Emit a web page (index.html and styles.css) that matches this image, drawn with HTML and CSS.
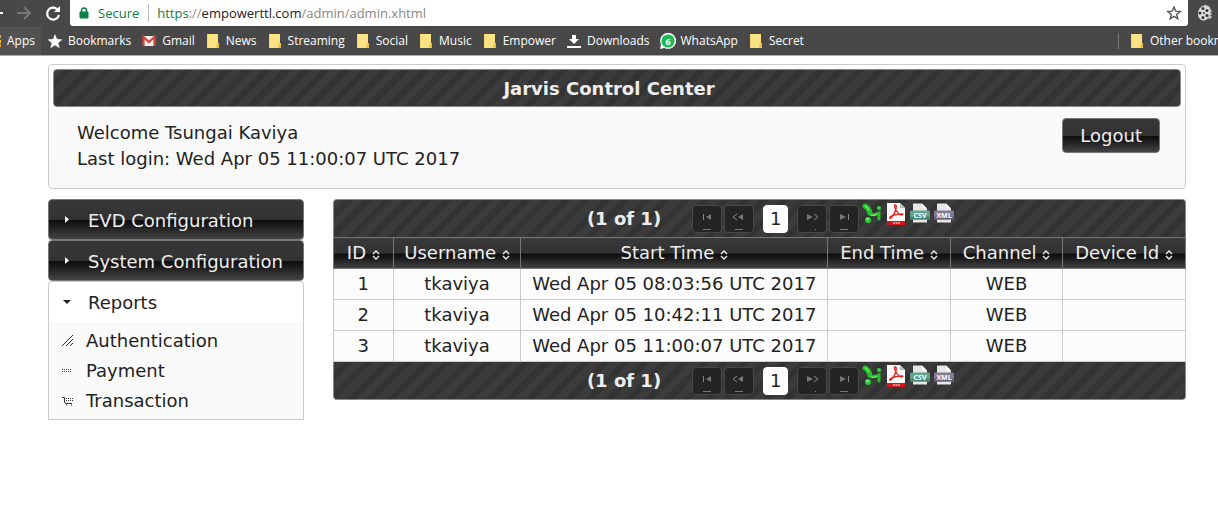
FILE: index.html
```html
<!DOCTYPE html>
<html lang="en">
<head>
<meta charset="utf-8">
<title>Jarvis Control Center</title>
<link rel="stylesheet" href="styles.css">
</head>
<body>
<svg class="sprites" aria-hidden="true">
  <symbol id="folder" viewBox="0 0 16 16"><path d="M2 1h11v9h1v5H2z" fill="#fce283"/><path d="M12 10h2v5h-3z" fill="#eec245"/><path d="M2 1h1v14H2z" fill="#f3d56b"/></symbol>
  <symbol id="sort" viewBox="0 0 8 12"><path d="M1 5l3-3 3 3M1 7l3 3 3-3" fill="none" stroke="#eee" stroke-width="1.4"/></symbol>
  <symbol id="first" viewBox="0 0 28 26"><path d="M10.500 8v6" stroke="#888"/><path d="M18 8v6l-5-3z" fill="#777"/><path d="M10 23.500h8" stroke="#777"/></symbol>
  <symbol id="prev" viewBox="0 0 28 26"><path d="M12 8l-4 3 4 3" fill="none" stroke="#888"/><path d="M18 8v6l-5-3z" fill="#777"/><path d="M10 23.500h8" stroke="#777"/></symbol>
  <symbol id="next" viewBox="0 0 28 26"><path d="M9 8v6l6-3z" fill="#777"/><path d="M16 8l4 3-4 3" fill="none" stroke="#888"/><path d="M17 23.500h1" stroke="#888"/></symbol>
  <symbol id="last" viewBox="0 0 28 26"><path d="M10 8v6l6-3z" fill="#777"/><path d="M18.500 8v6" stroke="#888"/><path d="M10 23.500h8" stroke="#777"/></symbol>
  <symbol id="excel" viewBox="0 0 20 22"><path d="M3 4q4 2 5 7" fill="none" stroke="#23bf2c" stroke-width="5" stroke-linecap="round"/><path d="M7 12q4 2 10-1v6" fill="none" stroke="#23bf2c" stroke-width="3" stroke-linecap="round"/><circle cx="17" cy="6" r="2" fill="#35d83c"/><circle cx="6" cy="18" r="3" fill="#2bd035"/><path d="M3 3.500q3 2 4 5M9 13q3 1 6-1" fill="none" stroke="#7df474" stroke-width="1.300"/><circle cx="5.500" cy="17" r="1" fill="#c9ffc0"/></symbol>
  <symbol id="pdf" viewBox="0 0 20 24"><path d="M1 1h13l5 5v17H1z" fill="#fafafa"/><path d="M14 1l5 5h-5z" fill="#bbb"/><path d="M1 19h18v4H1z" fill="#d3161b"/><path d="M9 3q2 0 1 4-1 5-5 9-2 1-1-1 4-3 12-3 2 0 0 1-4 0-7-7-1-3 0-3" fill="none" stroke="#e22620" stroke-width="1.300"/><path d="M7 21h7" stroke="#fff" stroke-dasharray="2 .6"/></symbol>
  <symbol id="csv" viewBox="0 0 20 21"><path d="M3 1h9l5 5v14H3z" fill="#e6e6e6"/><path d="M12 1v5h5z" fill="#fff"/><rect y="8" width="20" height="9" rx="1" fill="#65a28e"/><path d="M0 14h20v3H0z" fill="#498475"/><text x="10" y="15" text-anchor="middle" class="file-label">CSV</text></symbol>
  <symbol id="xml" viewBox="0 0 20 21"><path d="M3 1h9l5 5v14H3z" fill="#e6e6e6"/><path d="M12 1v5h5z" fill="#fff"/><rect y="8" width="20" height="9" rx="1" fill="#817c96"/><path d="M0 14h20v3H0z" fill="#646079"/><text x="10" y="15" text-anchor="middle" class="file-label">XML</text></symbol>
</svg>

<div class="browser">
  <div class="toolbar">
    <div class="nav-buttons">
      <svg width="3" height="26" viewBox="0 0 3 26"><path d="M0 13h3" stroke="#fff" stroke-width="2"/></svg>
      <svg width="14" height="26" viewBox="0 0 14 26"><path d="M0 13h12M7 7l6 6-6 6" fill="none" stroke="#777" stroke-width="2"/></svg>
      <svg width="16" height="26" viewBox="0 0 16 26"><path d="M12.500 9.500A6 6 0 1 0 14 15" fill="none" stroke="#fff" stroke-width="2.200"/><path d="M15 6v6H9z" fill="#fff"/></svg>
    </div>
    <div class="address">
      <svg width="10" height="12" viewBox="0 0 10 12"><path d="M1 5h8v6H1z" fill="#0b8043" stroke="#0b8043"/><path d="M2.500 5V3.500a2.500 2.500 0 0 1 5 0V5" fill="none" stroke="#0b8043" stroke-width="1.500"/></svg>
      <span class="secure">Secure</span>
      <span class="url"><span class="scheme">https</span>://<span class="host">empowerttl.com</span>/admin/admin.xhtml</span>
      <svg class="fav" width="16" height="16" viewBox="0 0 16 16"><path d="M8 2l1.700 4.200 4.500.3-3.500 2.900 1.100 4.400L8 11.400l-3.800 2.400 1.100-4.400-3.500-2.900 4.500-.3z" fill="none" stroke="#555" stroke-width="1.400"/></svg>
    </div>
    <svg class="reel" width="20" height="20" viewBox="0 0 20 20"><path d="M9 2q6-1 7 5v9h-5z" fill="#999"/><path d="M14 4v12M16 7v9" stroke="#ddd" stroke-dasharray="2 1"/><ellipse cx="9" cy="10" rx="6" ry="7.500" transform="rotate(15 9 10)" fill="#ddd"/><g fill="#333"><circle cx="8" cy="5.500" r="1.500"/><circle cx="12" cy="7.500" r="1.500"/><circle cx="12" cy="12.500" r="1.500"/><circle cx="8" cy="14.500" r="1.500"/><circle cx="5" cy="10" r="1.500"/><circle cx="9" cy="10" r="1"/></g></svg>
  </div>
  <nav class="bookmarks" aria-label="Bookmarks">
    <a class="apps" href="#"><svg width="2" height="16" viewBox="0 0 2 16"><path d="M0 2h1v3H0zM0 11h1v3H0z" fill="#e8a33a"/><path d="M0 7h1v3H0z" fill="#eac04b"/></svg>Apps</a>
    <a href="#"><svg width="16" height="16" viewBox="0 0 16 16"><path d="M8 1l2 5 5.500.4-4.200 3.500 1.400 5.300L8 12.300l-4.700 2.900 1.400-5.300L.5 6.400 6 6z" fill="#fff"/></svg>Bookmarks</a>
    <a href="#"><svg width="16" height="16" viewBox="0 0 16 16"><path d="M2 3h12v10H2z" fill="#f0eeee"/><path d="M2.500 13V4L8 9l5.500-5v9" fill="none" stroke="#d8423c" stroke-width="2.200"/></svg>Gmail</a>
    <a href="#"><svg width="16" height="16"><use href="#folder"/></svg>News</a>
    <a href="#"><svg width="16" height="16"><use href="#folder"/></svg>Streaming</a>
    <a href="#"><svg width="16" height="16"><use href="#folder"/></svg>Social</a>
    <a href="#"><svg width="16" height="16"><use href="#folder"/></svg>Music</a>
    <a href="#"><svg width="16" height="16"><use href="#folder"/></svg>Empower</a>
    <a href="#"><svg width="16" height="16" viewBox="0 0 16 16"><path d="M6 2h4v4h3l-5 5-5-5h3zM1 13h14v2H1z" fill="#fff"/></svg>Downloads</a>
    <a href="#"><svg width="16" height="16" viewBox="0 0 16 16"><path d="M0 16l1-4.500A8 8 0 1 1 4.500 15z" fill="#fff"/><circle cx="8" cy="8" r="6.600" fill="#1eb955"/><text x="8" y="11.500" text-anchor="middle" class="badge-count">6</text></svg>WhatsApp</a>
    <a href="#"><svg width="16" height="16"><use href="#folder"/></svg>Secret</a>
    <a class="other" href="#"><svg width="16" height="16"><use href="#folder"/></svg>Other bookmarks</a>
  </nav>
</div>

<main class="page">
  <header class="panel">
    <h1 class="panel-title">Jarvis Control Center</h1>
    <div class="panel-body">
      <div>Welcome Tsungai Kaviya<br>Last login: Wed Apr 05 11:00:07 UTC 2017</div>
      <button class="logout" type="button">Logout</button>
    </div>
  </header>

  <div class="columns">
    <nav class="menu" aria-label="Main menu">
      <button class="menu-head" type="button"><svg width="16" height="16" viewBox="0 0 16 16"><path d="M6 3v7l4-3.500z" fill="#fff"/></svg>EVD Configuration</button>
      <button class="menu-head" type="button"><svg width="16" height="16" viewBox="0 0 16 16"><path d="M6 3v7l4-3.500z" fill="#fff"/></svg>System Configuration</button>
      <button class="menu-head open" type="button"><svg width="16" height="16" viewBox="0 0 16 16"><path d="M4 5h8l-4 4z" fill="#222"/></svg>Reports</button>
      <div class="menu-items">
        <a href="#"><svg width="12" height="12" viewBox="0 0 12 12"><path d="M0 11L11 0M4 11l7-7M8 11l3-3" stroke="#333"/></svg>Authentication</a>
        <a href="#"><svg width="12" height="12" viewBox="0 0 12 12"><path d="M0 4.500h10M0 6.500h10" stroke="#444" stroke-dasharray="1 1"/></svg>Payment</a>
        <a href="#"><svg width="12" height="12" viewBox="0 0 12 12"><path d="M0 2.500h2.500V7l1 1.500H10" fill="none" stroke="#333"/><path d="M4 3.500h7M4 5.500h7" stroke="#333" stroke-dasharray="1 1"/><path d="M4 10h1M9 10h1" stroke="#222"/></svg>Transaction</a>
      </div>
    </nav>

    <section class="grid">
      <div class="pager">
        <span class="count">(1 of 1)</span>
        <button type="button" disabled aria-label="First page"><svg width="28" height="26"><use href="#first"/></svg></button>
        <button type="button" disabled aria-label="Previous page"><svg width="28" height="26"><use href="#prev"/></svg></button>
        <button class="current" type="button">1</button>
        <button type="button" disabled aria-label="Next page"><svg width="28" height="26"><use href="#next"/></svg></button>
        <button type="button" disabled aria-label="Last page"><svg width="28" height="26"><use href="#last"/></svg></button>
        <span class="exports">
          <a href="#" aria-label="Excel"><svg width="20" height="22"><use href="#excel"/></svg></a>
          <a href="#" aria-label="PDF"><svg width="20" height="24"><use href="#pdf"/></svg></a>
          <a href="#" aria-label="CSV"><svg width="20" height="22"><use href="#csv"/></svg></a>
          <a href="#" aria-label="XML"><svg width="20" height="22"><use href="#xml"/></svg></a>
        </span>
      </div>
      <table>
        <thead>
          <tr>
            <th class="col-id">ID <svg width="8" height="12"><use href="#sort"/></svg></th>
            <th class="col-user">Username <svg width="8" height="12"><use href="#sort"/></svg></th>
            <th class="col-start">Start Time <svg width="8" height="12"><use href="#sort"/></svg></th>
            <th>End Time <svg width="8" height="12"><use href="#sort"/></svg></th>
            <th>Channel <svg width="8" height="12"><use href="#sort"/></svg></th>
            <th>Device Id <svg width="8" height="12"><use href="#sort"/></svg></th>
          </tr>
        </thead>
        <tbody>
          <tr><td>1</td><td>tkaviya</td><td>Wed Apr 05 08:03:56 UTC 2017</td><td></td><td>WEB</td><td></td></tr>
          <tr><td>2</td><td>tkaviya</td><td>Wed Apr 05 10:42:11 UTC 2017</td><td></td><td>WEB</td><td></td></tr>
          <tr><td>3</td><td>tkaviya</td><td>Wed Apr 05 11:00:07 UTC 2017</td><td></td><td>WEB</td><td></td></tr>
        </tbody>
      </table>
      <div class="pager bottom">
        <span class="count">(1 of 1)</span>
        <button type="button" disabled aria-label="First page"><svg width="28" height="26"><use href="#first"/></svg></button>
        <button type="button" disabled aria-label="Previous page"><svg width="28" height="26"><use href="#prev"/></svg></button>
        <button class="current" type="button">1</button>
        <button type="button" disabled aria-label="Next page"><svg width="28" height="26"><use href="#next"/></svg></button>
        <button type="button" disabled aria-label="Last page"><svg width="28" height="26"><use href="#last"/></svg></button>
        <span class="exports">
          <a href="#" aria-label="Excel"><svg width="20" height="22"><use href="#excel"/></svg></a>
          <a href="#" aria-label="PDF"><svg width="20" height="24"><use href="#pdf"/></svg></a>
          <a href="#" aria-label="CSV"><svg width="20" height="22"><use href="#csv"/></svg></a>
          <a href="#" aria-label="XML"><svg width="20" height="22"><use href="#xml"/></svg></a>
        </span>
      </div>
    </section>
  </div>
</main>
</body>
</html>
```

FILE: styles.css
```css
:root {
  --stripes: repeating-linear-gradient(135deg, #3b3b3b 0 7px, #333 8px 13px, #3b3b3b 14px);
  --glass: linear-gradient(#383838, #323232 50%, #0c0c0c 51%, #1a1a1a 65%, #444);
}

* { box-sizing: border-box; }

body {
  margin: 0;
  background: #fff;
  color: #222;
  font: 18px/26px "DejaVu Sans", Verdana, sans-serif;
}

a { color: inherit; text-decoration: none; }
button { font: inherit; color: inherit; margin: 0; padding: 0; }
svg { flex: none; }

.sprites { position: absolute; width: 0; height: 0; }

/* Browser bar */
.browser {
  background: #484848;
  border-bottom: 1px solid #aaa;
  color: #fff;
  font: 12px/18px "Open Sans", "Noto Sans", sans-serif;
}

.toolbar { display: flex; height: 27px; }

.nav-buttons {
  display: flex;
  gap: 14px;
  width: 70px;
}

.address {
  flex: 1;
  display: flex;
  align-items: center;
  height: 26px;
  padding: 0 6px 0 9px;
  background: #fff;
  border-radius: 0 0 3px 3px;
  font-size: 13px;
}

.secure {
  margin-left: 9px;
  padding-right: 9px;
  border-right: 1px solid #bbb;
  color: #0b8043;
}

.url { margin-left: 8px; color: #888; }
.scheme { color: #0b8043; }
.host { color: #222; }
.fav { margin-left: auto; }
.reel { margin: 3px 3px 0 7px; }

.bookmarks {
  display: flex;
  gap: 10px;
  height: 28px;
  overflow: hidden;
}

.bookmarks a {
  display: flex;
  align-items: center;
  gap: 5px;
  white-space: nowrap;
}

.bookmarks .apps {
  margin-right: -4px;
  padding-right: 6px;
  background: #525252;
}

.bookmarks .other {
  width: 100px;
  height: 16px;
  margin: 6px 0 0 auto;
  padding-left: 10px;
  border-left: 1px solid #777;
  overflow: hidden;
}

.badge-count { font: bold 9px "Open Sans", sans-serif; fill: #fff; }
.file-label { font: bold 7px "Open Sans", sans-serif; fill: #fff; }

/* Page */
.page { padding: 8px 32px 24px 48px; }

.panel {
  padding: 4px;
  border: 1px solid #ccc;
  border-radius: 4px;
  background: linear-gradient(#fff 30%, #fafafa 35%, #f8f8f8);
}

.panel-title {
  margin: 0;
  padding: 6px 20px 4px 4px;
  border: 1px solid #888;
  border-radius: 4px;
  background: var(--stripes);
  color: #eee;
  font-size: 18px;
  line-height: 26px;
  text-align: center;
}

.panel-body {
  display: flex;
  justify-content: space-between;
  align-items: flex-start;
  padding: 13px 21px 12px 24px;
}

.logout {
  height: 35px;
  margin-top: -2px;
  padding: 0 17px;
  border: 1px solid #777;
  border-radius: 4px;
  background: var(--glass);
  color: #eee;
}

.columns {
  display: flex;
  align-items: flex-start;
  gap: 29px;
  margin-top: 10px;
}

.menu { width: 256px; }

.menu-head {
  display: flex;
  align-items: center;
  gap: 13px;
  width: 100%;
  height: 41px;
  padding: 2px 10px 0;
  border: 1px solid #777;
  border-radius: 4px;
  background: var(--glass);
  color: #eee;
}

.menu-head.open {
  border-color: #ccc;
  border-bottom: 0;
  border-radius: 4px 4px 0 0;
  background: #fff;
  color: #222;
}

.menu-items {
  display: flex;
  flex-direction: column;
  gap: 4px;
  padding: 6px 13px 5px;
  border: 1px solid #ccc;
  border-top: 0;
  background: #fafafa;
}

.menu-items a { display: flex; align-items: center; gap: 12px; }

.grid { flex: 1; min-width: 0; }

.pager {
  display: flex;
  justify-content: center;
  align-items: center;
  height: 38px;
  padding-left: 22px;
  border: 1px solid #888;
  border-bottom: 0;
  border-radius: 4px 4px 0 0;
  background: var(--stripes);
}

.pager.bottom {
  border-top: 0;
  border-bottom: 1px solid #888;
  border-radius: 0 0 4px 4px;
}

.count { margin-right: 31px; color: #eee; font-weight: bold; }

.pager button {
  display: flex;
  width: 30px;
  height: 28px;
  margin-right: 2px;
  border: 1px solid #484848;
  border-radius: 4px;
  background: #242424;
}

.pager .current {
  align-items: center;
  justify-content: center;
  width: 25px;
  margin: 0 9px 0 7px;
  border-color: #fff;
  background: #fff;
  color: #222;
}

.exports {
  display: flex;
  align-self: flex-start;
  gap: 4px;
  margin: 2px 0 0 1px;
}

.exports a { display: flex; }

table {
  width: 100%;
  border-collapse: collapse;
  text-align: center;
}

th, td {
  height: 31px;
  padding: 2px 10px;
  border: 1px solid #ccc;
  background: #fcfcfc;
  font-weight: normal;
  white-space: nowrap;
}

th {
  padding: 2px 9px;
  border-color: #777;
  background: var(--glass);
  color: #eee;
}

th svg { vertical-align: -2px; }

.col-id { width: 7%; }
.col-user { width: 15%; }
.col-start { width: 36%; }
```
